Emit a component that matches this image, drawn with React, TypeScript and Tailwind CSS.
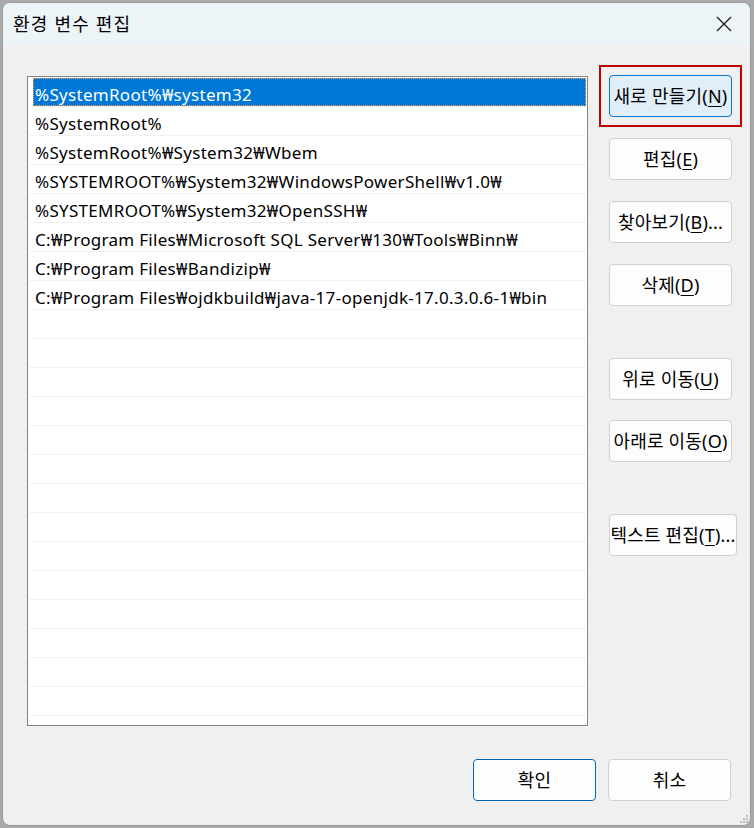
import React from "react";

const FONT = { fontFamily: '"Noto Sans", "Noto Sans CJK KR", sans-serif' };

const items = [
  "%SystemRoot%₩system32",
  "%SystemRoot%",
  "%SystemRoot%₩System32₩Wbem",
  "%SYSTEMROOT%₩System32₩WindowsPowerShell₩v1.0₩",
  "%SYSTEMROOT%₩System32₩OpenSSH₩",
  "C:₩Program Files₩Microsoft SQL Server₩130₩Tools₩Binn₩",
  "C:₩Program Files₩Bandizip₩",
  "C:₩Program Files₩ojdkbuild₩java-17-openjdk-17.0.3.0.6-1₩bin",
];

function Btn({
  label,
  mn,
  suffix = "",
  variant = "normal",
  wide = false,
}: {
  label: string;
  mn: string;
  suffix?: string;
  variant?: "normal" | "hover" | "default";
  wide?: boolean;
}) {
  const cls =
    variant === "hover"
      ? "bg-[#e0eef9] border-[#0078d4]"
      : variant === "default"
      ? "bg-[#fdfdfd] border-[#0067c0]"
      : "bg-[#fdfdfd] border-[#d0d0d0]";
  return (
    <div
      className={`h-[42px] ${wide ? "w-[128px]" : "w-[123px]"} rounded-[4px] border ${cls} flex items-center justify-center text-[18px] tracking-[0.2px] text-black whitespace-nowrap`}
    >
      <span className="pt-[1px]">
        {label}
        {mn ? (
          <>
            (<span className="underline underline-offset-[3px]">{mn}</span>)
          </>
        ) : null}
        {suffix}
      </span>
    </div>
  );
}

export default function App() {
  const rows = Array.from({ length: 23 }, (_, i) => items[i] ?? "");
  return (
    <div className="w-[754px] h-[828px] bg-[#a9a9a9] p-[2px] pr-[3px]" style={FONT}>
      <div className="w-full h-full rounded-[8px] border border-[#9a9a9a] overflow-hidden flex flex-col bg-[#f0f0f0] relative">
        {/* title bar */}
        <div className="h-[42px] bg-[#edf4f8] flex items-center justify-between pl-[10px] pr-[18px] shrink-0">
          <span className="text-[18px] tracking-[1.2px] text-black">환경 변수 편집</span>
          <svg width="16" height="16" viewBox="0 0 16 16">
            <path d="M1 1 L15 15 M15 1 L1 15" stroke="#1a1a1a" strokeWidth="1.3" fill="none" />
          </svg>
        </div>
        {/* body */}
        <div className="flex pl-[24px] pt-[31px]">
          {/* list */}
          <div className="w-[561px] h-[650px] border border-[#838383] bg-white pt-[1px] px-[1px] overflow-hidden">
            {rows.map((t, i) => (
              <div key={i} className="h-[29px] border-b border-[#f0f0f0] shrink-0">
                {i === 0 ? (
                  <div className="ml-[4px] h-[28px] bg-[#0078d7] text-white border border-dotted border-[#f5a04a] flex items-center pl-[1px] pt-[5px] text-[17px] tracking-[0.3px] whitespace-nowrap">
                    {t}
                  </div>
                ) : (
                  <div className="ml-[4px] h-[28px] text-black flex items-center pl-[2px] pt-[5px] text-[17px] tracking-[0.3px] whitespace-nowrap">
                    {t}
                  </div>
                )}
              </div>
            ))}
          </div>
          {/* buttons */}
          <div className="ml-[21px] flex flex-col">
            <div className="mt-[-11px] ml-[-10px] w-[143px] h-[62px] border-2 border-[#c00000] flex items-center pl-[8px]">
              <Btn label="새로 만들기" mn="N" variant="hover" />
            </div>
            <div className="mt-[11px] flex flex-col gap-[21px]">
              <Btn label="편집" mn="E" />
              <Btn label="찾아보기" mn="B" suffix="..." />
              <Btn label="삭제" mn="D" />
            </div>
            <div className="mt-[52px] flex flex-col gap-[20px]">
              <Btn label="위로 이동" mn="U" />
              <Btn label="아래로 이동" mn="O" />
            </div>
            <div className="mt-[52px]">
              <Btn label="텍스트 편집" mn="T" suffix="..." wide />
            </div>
          </div>
        </div>
        {/* bottom buttons */}
        <div className="flex justify-end gap-[12px] pr-[19px] mt-[33px]">
          <Btn label="확인" mn="" variant="default" />
          <Btn label="취소" mn="" />
        </div>
        {/* resize grip */}
        <svg className="absolute right-[1px] bottom-[1px]" width="10" height="10" viewBox="0 0 10 10">
          {[
            [7, 1],
            [4, 4],
            [7, 4],
            [1, 7],
            [4, 7],
            [7, 7],
          ].map(([x, y], i) => (
            <rect key={i} x={x} y={y} width="2" height="2" fill="#b8b8b8" />
          ))}
        </svg>
      </div>
    </div>
  );
}
